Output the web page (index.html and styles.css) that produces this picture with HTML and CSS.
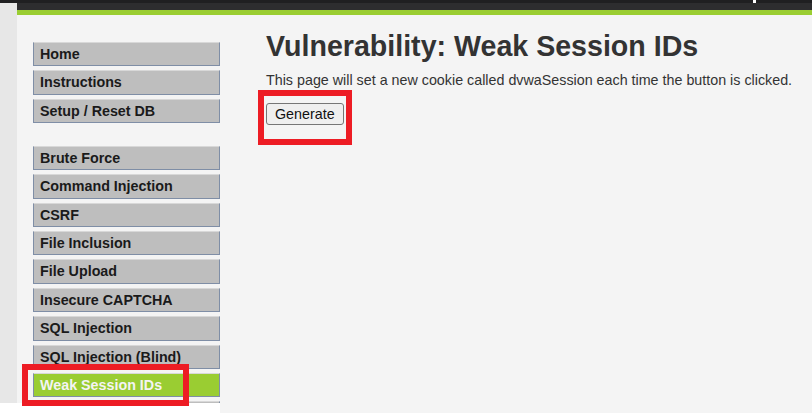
FILE: index.html
```html
<!DOCTYPE html>
<html>
<head>
<meta charset="utf-8">
<title>Vulnerability: Weak Session IDs</title>
<link rel="stylesheet" href="styles.css">
</head>
<body>
<div class="topbar"><span class="topmark"></span></div>
<div class="page">
  <div class="strip"></div>
  <div class="frame">
    <div class="header"></div>
    <div class="accent"></div>
    <div class="body">
      <nav class="menu">
        <ul class="group">
          <li><a class="item">Home</a></li>
          <li><a class="item">Instructions</a></li>
          <li><a class="item">Setup / Reset DB</a></li>
        </ul>
        <ul class="group">
          <li><a class="item">Brute Force</a></li>
          <li><a class="item">Command Injection</a></li>
          <li><a class="item">CSRF</a></li>
          <li><a class="item">File Inclusion</a></li>
          <li><a class="item">File Upload</a></li>
          <li><a class="item">Insecure CAPTCHA</a></li>
          <li><a class="item">SQL Injection</a></li>
          <li><a class="item">SQL Injection (Blind)</a></li>
          <li><a class="item active">Weak Session IDs</a></li>
          <li><a class="item"></a></li>
        </ul>
      </nav>
      <main class="content">
        <h1 class="title">Vulnerability: Weak Session IDs</h1>
        <p class="lead">This page will set a new cookie called dvwaSession each time the button is clicked.</p>
        <button class="btn" type="button">Generate</button>
      </main>
    </div>
  </div>
</div>
<div class="mark mark-button"></div>
<div class="mark mark-menu"></div>
</body>
</html>
```
FILE: styles.css
```css
html, body {
  margin: 0;
  padding: 0;
}
body {
  background: #ffffff;
  font-family: "Liberation Sans", Arial, sans-serif;
  width: 812px;
  height: 413px;
  overflow: hidden;
  position: relative;
}
.topbar {
  height: 3px;
  background: #1f1f21;
  display: flex;
  padding-left: 753px;
}
.topmark {
  width: 3px;
  height: 3px;
  background: #ffffff;
}
.page {
  display: flex;
  align-items: flex-start;
}
.strip {
  width: 17px;
  height: 400px;
  background: #e7e7e7;
  flex: none;
}
.frame {
  flex: 1;
  display: flex;
  flex-direction: column;
}
.header {
  height: 7px;
  background: #2d2d2f;
}
.accent {
  height: 5px;
  background: #9acd32;
}
.body {
  display: flex;
  align-items: flex-start;
}
.menu {
  width: 203px;
  height: 388px;
  background: #f4f4f4;
  box-sizing: border-box;
  padding: 27px 0 0 16px;
  overflow: hidden;
  flex: none;
}
.group {
  list-style: none;
  margin: 0 0 22.6px 0;
  padding: 0;
}
.group li {
  margin: 0 0 4px 0;
}
.item {
  display: block;
  box-sizing: border-box;
  width: 187px;
  height: 24.4px;
  padding: 0 6px;
  line-height: 22.4px;
  font-size: 14.3px;
  font-weight: bold;
  color: #1a1a1a;
  background: #bebebe;
  border: 1px solid #7f8ea6;
  border-top-color: #d8d8d8;
}
.item.active {
  background: #9acd32;
  color: #f4f4f4;
}
.content {
  flex: 1;
  height: 398px;
  background: #f4f4f4;
  padding: 14.5px 0 0 46px;
  box-sizing: border-box;
}
.title {
  margin: 0;
  font-size: 28.6px;
  line-height: 32px;
  font-weight: bold;
  color: #333333;
}
.lead {
  margin: 10.8px 0 14.7px 0;
  font-size: 14.3px;
  line-height: 16px;
  color: #333333;
  white-space: nowrap;
}
.btn {
  font-family: "Liberation Sans", Arial, sans-serif;
  font-size: 14.3px;
  line-height: 16px;
  padding: 2px 8px;
  background: #efefef;
  color: #111111;
  border: 1px solid #767676;
  border-radius: 3px;
  margin: 0;
}
.mark {
  position: absolute;
  border: 6px solid #ed1c24;
  box-sizing: border-box;
}
.mark-button {
  left: 258px;
  top: 90px;
  width: 94px;
  height: 55px;
}
.mark-menu {
  left: 22px;
  top: 364px;
  width: 167px;
  height: 42px;
}
```
